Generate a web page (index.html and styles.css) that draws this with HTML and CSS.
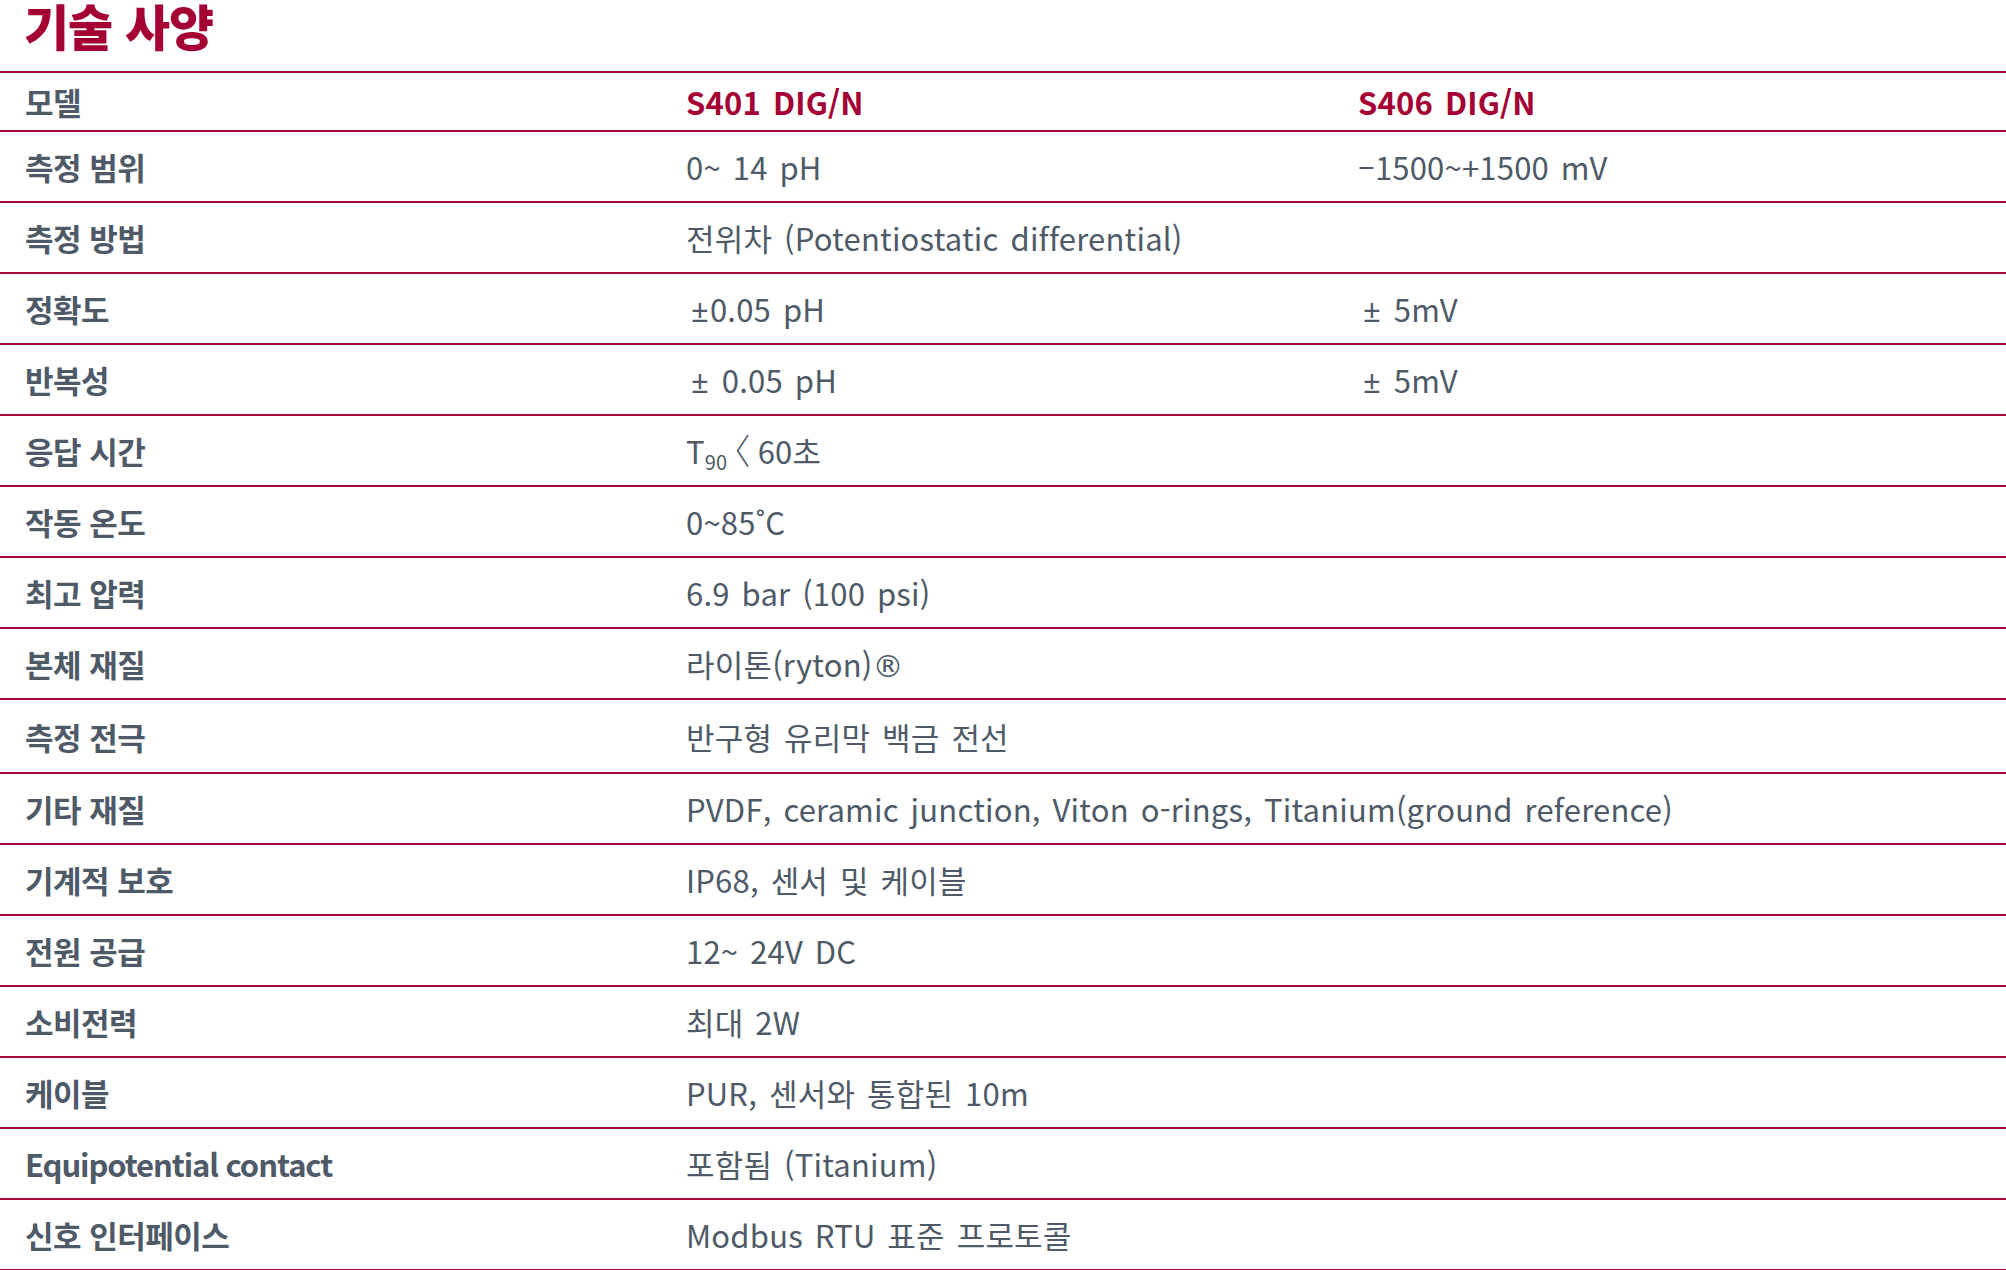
FILE: index.html
```html
<!DOCTYPE html>
<html lang="ko">
<head>
<meta charset="utf-8">
<title>기술 사양</title>
<link rel="stylesheet" href="styles.css">
</head>
<body>
<div class="spec">
  <h2 class="spec-title">기술 사양</h2>
  <div class="spec-table">
    <div class="row head">
      <div class="label">모델</div>
      <div class="val model">S401 DIG/N</div>
      <div class="val model">S406 DIG/N</div>
    </div>
    <div class="row">
      <div class="label">측정 범위</div>
      <div class="val">0~ 14 pH</div>
      <div class="val">–1500~+1500 mV</div>
    </div>
    <div class="row">
      <div class="label">측정 방법</div>
      <div class="val wide">전위차 (Potentiostatic differential)</div>
    </div>
    <div class="row">
      <div class="label">정확도</div>
      <div class="val"><span class="pm">±</span>0.05 pH</div>
      <div class="val"><span class="pm">±</span>&nbsp;5mV</div>
    </div>
    <div class="row">
      <div class="label">반복성</div>
      <div class="val"><span class="pm">±</span>&nbsp;0.05 pH</div>
      <div class="val"><span class="pm">±</span>&nbsp;5mV</div>
    </div>
    <div class="row">
      <div class="label">응답 시간</div>
      <div class="val wide">T<sub class="sub">90</sub><span class="lt">〈</span>60초</div>
    </div>
    <div class="row">
      <div class="label">작동 온도</div>
      <div class="val wide">0~85˚C</div>
    </div>
    <div class="row">
      <div class="label">최고 압력</div>
      <div class="val wide">6.9 bar (100 psi)</div>
    </div>
    <div class="row">
      <div class="label">본체 재질</div>
      <div class="val wide">라이톤(ryton)<span class="reg">®</span></div>
    </div>
    <div class="row tall">
      <div class="label">측정 전극</div>
      <div class="val wide">반구형 유리막 백금 전선</div>
    </div>
    <div class="row">
      <div class="label">기타 재질</div>
      <div class="val wide">PVDF, ceramic junction, Viton o-rings, Titanium(ground reference)</div>
    </div>
    <div class="row">
      <div class="label">기계적 보호</div>
      <div class="val wide">IP68, 센서 및 케이블</div>
    </div>
    <div class="row">
      <div class="label">전원 공급</div>
      <div class="val wide">12~ 24V DC</div>
    </div>
    <div class="row">
      <div class="label">소비전력</div>
      <div class="val wide">최대 2W</div>
    </div>
    <div class="row">
      <div class="label">케이블</div>
      <div class="val wide">PUR, 센서와 통합된 10m</div>
    </div>
    <div class="row">
      <div class="label latin">Equipotential contact</div>
      <div class="val wide">포함됨 (Titanium)</div>
    </div>
    <div class="row">
      <div class="label">신호 인터페이스</div>
      <div class="val wide">Modbus RTU 표준 프로토콜</div>
    </div>
  </div>
</div>
</body>
</html>
```

FILE: styles.css
```css
html, body {
  margin: 0;
  padding: 0;
  background: #ffffff;
}

body {
  font-family: "Noto Sans CJK KR", "Noto Sans", sans-serif;
  color: #4e5a67;
  overflow: hidden;
}

.spec {
  width: 2006px;
}

.spec-title {
  margin: 0;
  height: 71px;
  padding-left: 24px;
  box-sizing: border-box;
  font-size: 49px;
  line-height: 50px;
  font-weight: 900;
  color: #a50034;
  letter-spacing: -1px;
}

.spec-table {
  border-top: 2px solid #a6093d;
}

.row {
  display: grid;
  grid-template-columns: 661px 672px 1fr;
  align-items: center;
  height: 69px;
  padding-left: 25px;
  border-bottom: 2px solid #a6093d;
  font-size: 31px;
}

.row.head {
  height: 57px;
}

.row.tall {
  height: 72px;
}

.label {
  font-weight: 700;
  color: #4e5a67;
  letter-spacing: -0.5px;
}

.label.latin {
  letter-spacing: -1.1px;
}

.val {
  font-weight: 400;
  letter-spacing: 0.2px;
  word-spacing: 3px;
}

.val.wide {
  grid-column: 2 / 4;
}

.model {
  font-weight: 700;
  color: #a50034;
}

.pm {
  font-family: "Noto Sans", sans-serif;
  margin-left: 5px;
  margin-right: 1px;
}

.sub {
  font-size: 20px;
  vertical-align: -6px;
  line-height: 0;
  letter-spacing: 0;
}

.lt {
  font-size: 35px;
  font-weight: 300;
  line-height: 0;
  font-feature-settings: "halt";
  margin: 0 7px 0 6px;
}

.reg {
  font-family: "DejaVu Sans", sans-serif;
  font-size: 31px;
}
```
